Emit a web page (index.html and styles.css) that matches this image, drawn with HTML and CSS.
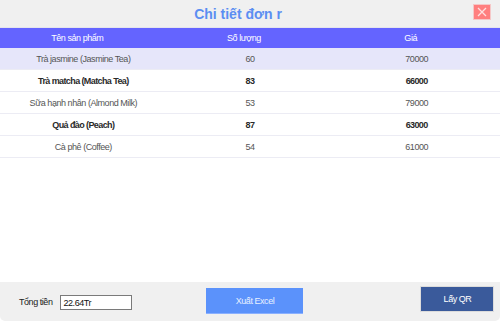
FILE: index.html
```html
<!DOCTYPE html>
<html lang="vi">
<head>
    <meta charset="UTF-8">
    <title>Chi tiết đơn</title>
    <link rel="stylesheet" href="styles.css">
</head>
<body>
    <div class="window">
        <div class="titlebar">
            <span></span>
            <h1 class="title">Chi tiết đơn r</h1>
            <button class="close-btn" title="Đóng">
                <svg width="10" height="10" viewBox="0 0 10 10">
                    <path d="M1 1 L9 9 M9 1 L1 9" stroke="#ffe0e0" stroke-width="1.3" fill="none"/>
                </svg>
            </button>
        </div>

        <div class="grid">
            <div class="grid-row header">
                <div class="cell">Tên sản phẩm</div>
                <div class="cell">Số lượng</div>
                <div class="cell">Giá</div>
            </div>
            <div class="grid-row selected">
                <div class="cell">Trà jasmine (Jasmine Tea)</div>
                <div class="cell">60</div>
                <div class="cell">70000</div>
            </div>
            <div class="grid-row alt">
                <div class="cell">Trà matcha (Matcha Tea)</div>
                <div class="cell">83</div>
                <div class="cell">66000</div>
            </div>
            <div class="grid-row">
                <div class="cell">Sữa hạnh nhân (Almond Milk)</div>
                <div class="cell">53</div>
                <div class="cell">79000</div>
            </div>
            <div class="grid-row alt">
                <div class="cell">Quả đào (Peach)</div>
                <div class="cell">87</div>
                <div class="cell">63000</div>
            </div>
            <div class="grid-row">
                <div class="cell">Cà phê (Coffee)</div>
                <div class="cell">54</div>
                <div class="cell">61000</div>
            </div>
        </div>

        <div class="empty"></div>

        <div class="footer">
            <label class="total-label" for="total">Tổng tiền</label>
            <input class="total-box" id="total" type="text" value="22.64Tr" readonly>
            <button class="btn btn-excel">Xuất Excel</button>
            <button class="btn btn-qr">Lấy QR</button>
        </div>
    </div>
</body>
</html>
```

FILE: styles.css
```css
/* khung cửa sổ */
body {
    margin: 0;
    font-family: "Liberation Sans", Arial, sans-serif;
    font-size: 9px;
    letter-spacing: -0.45px;
    background: #ffffff;
}

.window {
    width: 500px;
    height: 321px;
    display: flex;
    flex-direction: column;
}

/* thanh tiêu đề */
.titlebar {
    height: 27px;
    background: #f0f0f0;
    border-bottom: 1px solid #e4e4ee;
    display: grid;
    grid-template-columns: 1fr auto 1fr;
    align-items: center;
}

.title {
    margin: 0 24px 0 0;
    font-size: 14px;
    font-weight: bold;
    letter-spacing: 0;
    color: #5b8ef2;
}

.close-btn {
    justify-self: end;
    margin-right: 9px;
    margin-top: -3px;
    width: 18px;
    height: 16px;
    padding: 0;
    border: 1px solid #f5c8c8;
    background: #ff7f7f;
    display: flex;
    align-items: center;
    justify-content: center;
}

/* bảng chi tiết */
.grid-row {
    display: grid;
    grid-template-columns: 1fr 1fr 1fr;
    height: 22px;
    align-items: center;
    border-bottom: 1px solid #ececf4;
    box-sizing: border-box;
    color: #555555;
}

.grid-row .cell {
    text-align: center;
}

.grid-row.header {
    height: 20px;
    background: #6464ff;
    color: #ffffff;
    border-bottom: none;
}

.grid-row.header .cell {
    padding-right: 12px;
}

.grid-row.selected {
    background: #e6e6fa;
}

.grid-row.alt {
    font-weight: bold;
    letter-spacing: -0.6px;
    color: #2a2a2a;
}

.empty {
    flex: 1;
}

/* thanh dưới */
.footer {
    height: 39px;
    background: #f0f0f0;
    border-radius: 0 0 5px 5px;
    display: flex;
    align-items: flex-start;
}

.total-label {
    margin: 15px 0 0 19px;
    white-space: nowrap;
    color: #222222;
}

.total-box {
    margin: 13px 0 0 8px;
    width: 72px;
    height: 15px;
    box-sizing: border-box;
    padding: 0 2px;
    border: 1px solid #7a7a7a;
    font-family: inherit;
    font-size: 9px;
    letter-spacing: -0.45px;
    color: #111111;
    background: #ffffff;
}

.btn {
    font-family: inherit;
    font-size: 9px;
    letter-spacing: -0.45px;
    color: #ffffff;
    height: 26px;
    padding: 0;
    cursor: pointer;
}

.btn-excel {
    margin: 6px 0 0 74px;
    width: 97px;
    border: none;
    border-bottom: 1px solid #8ab0ff;
    background: #5b92fb;
    color: #e8f0ff;
}

.btn-qr {
    margin: 4px 0 0 117px;
    width: 74px;
    border: 1px solid #dcdcdc;
    background: #3a5a9b;
}
```
